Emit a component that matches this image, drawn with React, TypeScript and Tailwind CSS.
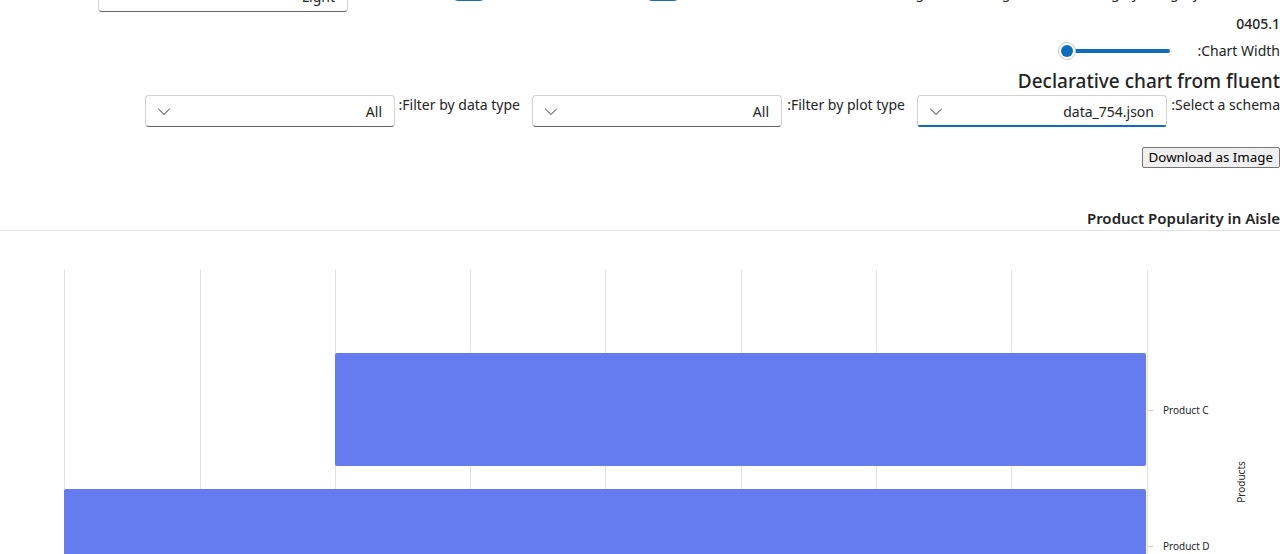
import React from "react";

const font = "font-['Segoe_UI','Noto_Sans',sans-serif]";

const Chevron = () => (
  <svg width="20" height="20" viewBox="0 0 20 20" fill="none">
    <path d="M15.85 7.65a.5.5 0 0 1 0 .7l-5.5 5.5a.5.5 0 0 1-.7 0l-5.5-5.5a.5.5 0 1 1 .7-.7L10 12.79l5.15-5.14a.5.5 0 0 1 .7 0Z" fill="#616161" />
  </svg>
);

const Dropdown = ({ value, focused }: { value: string; focused?: boolean }) => (
  <div className="relative flex h-[32px] w-[250px] shrink-0 items-center justify-between rounded-[4px] border border-[#d1d1d1] border-b-[#616161] bg-white pl-[8px] pr-[12px]">
    <span className="text-[14px] text-[#242424]">{value}</span>
    <Chevron />
    {focused && <div className="absolute -bottom-px left-0 right-0 h-[2px] rounded-b-[4px] bg-[#0f6cbd]" />}
  </div>
);

const Switch = () => (
  <div className="flex h-[20px] w-[40px] shrink-0 items-center justify-start rounded-full bg-[#0f6cbd] px-[3px]">
    <div className="h-[14px] w-[14px] rounded-full bg-white" />
  </div>
);

const gridX = [64, 200, 335, 470, 605, 741, 876, 1011, 1147];
const svgFont = "Segoe UI, Noto Sans, sans-serif";

const Chart = () => (
  <svg width="1280" height="330" className="block" direction="ltr">
    {gridX.map((x) => (
      <line key={x} x1={x + 0.5} x2={x + 0.5} y1={39} y2={330} stroke="#e1e1e1" strokeWidth="1" />
    ))}
    <rect x={335} y={122} width={811} height={113} rx={2} fill="#647cef" />
    <rect x={64} y={258} width={1082} height={113} rx={2} fill="#647cef" />
    <line x1={1147} x2={1153} y1={179.5} y2={179.5} stroke="#d6d6d6" />
    <line x1={1147} x2={1153} y1={315.5} y2={315.5} stroke="#d6d6d6" />
    <text x={1163} y={183} fontSize="10" fill="#242424" fontFamily={svgFont} textAnchor="start">
      Product C
    </text>
    <text x={1163} y={319} fontSize="10" fill="#242424" fontFamily={svgFont} textAnchor="start">
      Product D
    </text>
    <text
      x={0}
      y={0}
      fontSize="10"
      fill="#242424"
      textAnchor="middle"
      fontFamily={svgFont}
      transform="translate(1245 251) rotate(-90)"
    >
      Products
    </text>
  </svg>
);

export default function App() {
  return (
    <div dir="rtl" className={`${font} h-[554px] overflow-hidden bg-white text-[14px] text-[#242424]`}>
      {/* top controls, scrolled mostly out of view */}
      <div className="-mt-[20px] flex h-[32px] items-start pr-[80px]">
        <span className="mt-[3px] w-[500px] shrink-0 overflow-hidden whitespace-nowrap pl-[4px] leading-[20px]">
          Enable rounded corners for legend: Select_gradient, stacking by category:
        </span>
        <div className="mr-[17px] mt-[1px]">
          <Switch />
        </div>
        <span className="mt-[3px] w-[154px] shrink-0 whitespace-nowrap pr-[8px] leading-[20px]">Enable Gradient:</span>
        <div className="mt-[1px]">
          <Switch />
        </div>
        <span className="mt-[3px] w-[101px] shrink-0 whitespace-nowrap pr-[8px] leading-[20px]">Select theme:</span>
        <Dropdown value="Light" />
      </div>

      <div className="mt-[2px] h-[20px] text-[14px] font-medium leading-[20px]">0405.1</div>

      <div className="mt-[7px] flex h-[20px] items-center">
        <span className="w-[102px] shrink-0 whitespace-nowrap leading-[20px]">Chart Width:</span>
        <div className="relative flex h-[20px] w-[120px] items-center pl-[10px] pr-[8px]">
          <div className="h-[4px] flex-1 rounded-full bg-[#0f6cbd]" />
          <div className="absolute left-[0px] top-[1px] flex h-[18px] w-[18px] items-center justify-center rounded-full border border-[#c7c7c7] bg-white">
            <div className="h-[12px] w-[12px] rounded-full bg-[#0f6cbd]" />
          </div>
        </div>
      </div>

      <div className="mt-[6px] text-[19px] font-medium leading-[28px]">Declarative chart from fluent</div>

      <div className="flex items-start">
        <span className="w-[113px] shrink-0 whitespace-nowrap leading-[20px]">Select a schema:</span>
        <Dropdown value="data_754.json" focused />
        <span className="w-[135px] shrink-0 whitespace-nowrap pr-[12px] leading-[20px]">Filter by plot type:</span>
        <Dropdown value="All" />
        <span className="w-[137px] shrink-0 whitespace-nowrap pr-[12px] leading-[20px]">Filter by data type:</span>
        <Dropdown value="All" />
      </div>

      <div className="mt-[20px] flex">
        <button className="h-[21px] rounded-[2px] border border-[#767676] bg-[#efefef] px-[6px] text-[13.33px] leading-[19px] text-black">
          Download as Image
        </button>
      </div>

      <div className="mt-[40px] border-b border-[#e0e0e0] pb-[1px] text-[15px] font-semibold leading-[21px]">
        Product Popularity in Aisle
      </div>

      <Chart />
    </div>
  );
}
